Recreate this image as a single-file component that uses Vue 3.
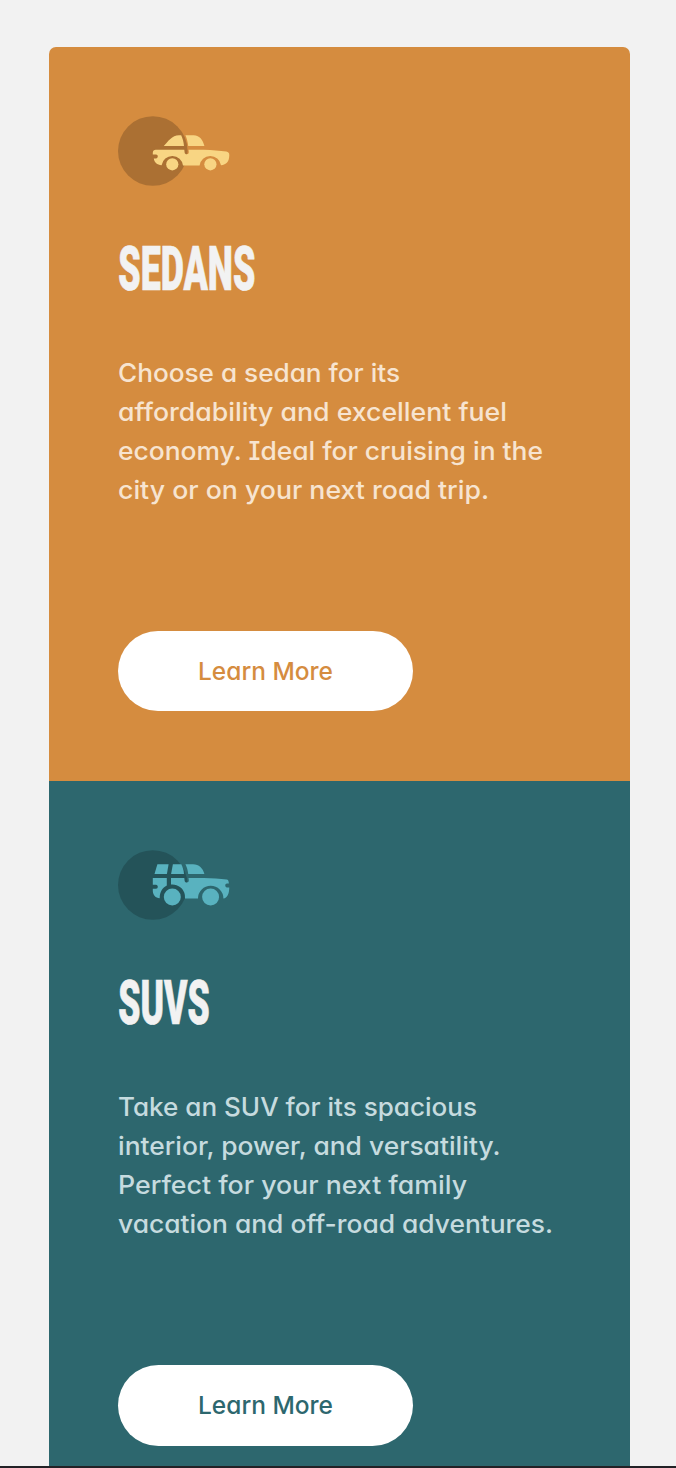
<script setup>
const cards = [
  {
    id: 'sedans',
    title: 'SEDANS',
    titleWidth: 137,
    lines: [
      ['Choose a sedan for its', 282],
      ['affordability and excellent fuel', 389],
      ['economy. Ideal for cruising in the', 425],
      ['city or on your next road trip.', 371],
    ],
  },
  {
    id: 'suvs',
    title: 'SUVS',
    titleWidth: 91.5,
    lines: [
      ['Take an SUV for its spacious', 359],
      ['interior, power, and versatility.', 382.5],
      ['Perfect for your next family', 349],
      ['vacation and off-road adventures.', 435],
    ],
  },
]
</script>

<template>
  <main class="page">
    <div class="stack">
      <section v-for="card in cards" :key="card.id" class="card" :class="card.id">
        <svg v-if="card.id === 'sedans'" class="icon" viewBox="0 0 112 70">
          <circle class="disc" cx="34.8" cy="35" r="34.8" />
          <g class="car">
            <path d="M45.8 30C50 25.5 54 19.3 61 19.3H63.2C64.8 22.8 65.7 26.3 66 30Z" />
            <path d="M67.4 19.3H75.5C82 19.3 85 24.5 86.4 30H70.2C69.8 26.2 68.9 22.6 67.4 19.3Z" />
            <path d="M37.8 33.7H66.3L66.6 36.2C66.8 39 71 38.8 70.8 36L70.5 33.7H86C94 33.9 102 34.7 108.3 35.6C110.3 35.9 111.5 37 111.3 39.5C111 46 108.5 48.6 103 49.2A10.8 10.8 0 0 0 81.6 49.6H65A10.8 10.8 0 0 0 43.6 49.2C39 48.6 36.4 46.5 35.8 42.4H38C40.4 42.4 40.4 38.6 38 38.6H34.8V36.8C34.8 34.8 36 33.7 37.8 33.7Z" />
            <circle cx="54.3" cy="48.3" r="6.1" />
            <circle cx="92.4" cy="48.3" r="6.1" />
          </g>
        </svg>
        <svg v-else class="icon" viewBox="0 0 112 70">
          <circle class="disc" cx="34.8" cy="35" r="34.8" />
          <g class="car">
            <path d="M39.4 14.3H50.6L48.9 23.9H36.5Z" />
            <path d="M54.9 14.3H63.3C64.8 17.2 65.7 20.4 66 23.9H53.1Z" />
            <path d="M67.4 14.3H75C81 14.3 85 18.5 86.4 23.9H70.2C69.8 20.3 68.9 17.2 67.4 14.3Z" />
            <path d="M34.8 28H48.8V35.6C44.5 37.7 41.7 41.8 41.7 48.3C37.5 47.8 35 45.2 34.8 41V38.8H38C40.4 38.8 40.4 34.8 38 34.8H34.8Z" />
            <path d="M53 28H66.3L66.6 30.5C66.8 33.3 71 33.1 70.8 30.3L70.5 28H86C94 28.1 102 28.8 108.7 29.5C110 29.7 110.7 30.8 110.9 33.6H109C106.7 33.6 106.7 37.4 109 37.4H111.3C111.2 44 109.2 48 105.4 48.4A12.7 12.7 0 1 0 80 48.4H67A12.7 12.7 0 0 0 53 34.5Z" />
            <circle cx="54.3" cy="47" r="8.5" />
            <circle cx="92.6" cy="47" r="8.5" />
          </g>
        </svg>
        <h2 class="title">
          <svg width="150" height="56">
            <text x="0.3" y="47.6" :textLength="card.titleWidth" lengthAdjust="spacingAndGlyphs">{{ card.title }}</text>
          </svg>
        </h2>
        <p class="copy">
          <svg v-for="[text, width] in card.lines" :key="text" class="line" width="450" height="39">
            <text x="0" y="28" :textLength="width" lengthAdjust="spacingAndGlyphs">{{ text }}</text>
          </svg>
        </p>
        <button class="more" type="button">
          <svg width="136" height="36">
            <text x="0" y="27" textLength="135" lengthAdjust="spacingAndGlyphs">Learn More</text>
          </svg>
        </button>
      </section>
    </div>
    <div class="edge"></div>
  </main>
</template>

<style>
body {
  background: #f2f2f2;
}
</style>

<style scoped>
.page {
  height: 1468px;
  display: flex;
  flex-direction: column;
  overflow: hidden;
  background: #f2f2f2;
  font-family: Inter, "Liberation Sans", sans-serif;
}
.stack {
  flex: 1;
  min-height: 0;
  overflow: hidden;
  padding: 46.6px 46.3px 0 48.7px;
}
.card {
  box-sizing: border-box;
  height: 734.3px;
  padding: 69.5px 69.5px 0;
  display: flex;
  flex-direction: column;
  align-items: flex-start;
}
.sedans {
  --tone: #d58c3f;
  --disc: #ab7033;
  --car: #f8d583;
  --copy: #f7e4d0;
  background: var(--tone);
  border-radius: 7px 7px 0 0;
}
.suvs {
  --tone: #2d676e;
  --disc: #245359;
  --car: #59b2bf;
  --copy: #c6dbdf;
  background: var(--tone);
}
svg {
  display: block;
  overflow: visible;
}
.icon {
  width: 112px;
  height: 70px;
}
.disc {
  fill: var(--disc);
}
.car {
  fill: var(--car);
}
.title {
  margin: 56px 0 0;
  height: 56px;
}
.title text {
  font-family: Roboto, "Liberation Sans", sans-serif;
  font-size: 62px;
  font-weight: 900;
  fill: #f2f2f2;
  stroke: #f2f2f2;
  stroke-width: 0.7px;
}
.copy {
  margin: 56px 0 0;
  height: 156px;
}
.copy text {
  font-size: 25.8px;
  font-weight: 500;
  font-feature-settings: "cv11", "cv08";
  fill: var(--copy);
}
.more {
  margin: 120.9px 0 0;
  width: 295px;
  height: 80.3px;
  padding: 0;
  border: 0;
  border-radius: 41px;
  background: #fff;
  display: flex;
  align-items: center;
  justify-content: center;
  font-family: inherit;
}
.more text {
  font-size: 24.5px;
  font-weight: 500;
  font-feature-settings: "cv11";
  fill: var(--tone);
}
.edge {
  height: 2px;
  background: #222226;
}
</style>
